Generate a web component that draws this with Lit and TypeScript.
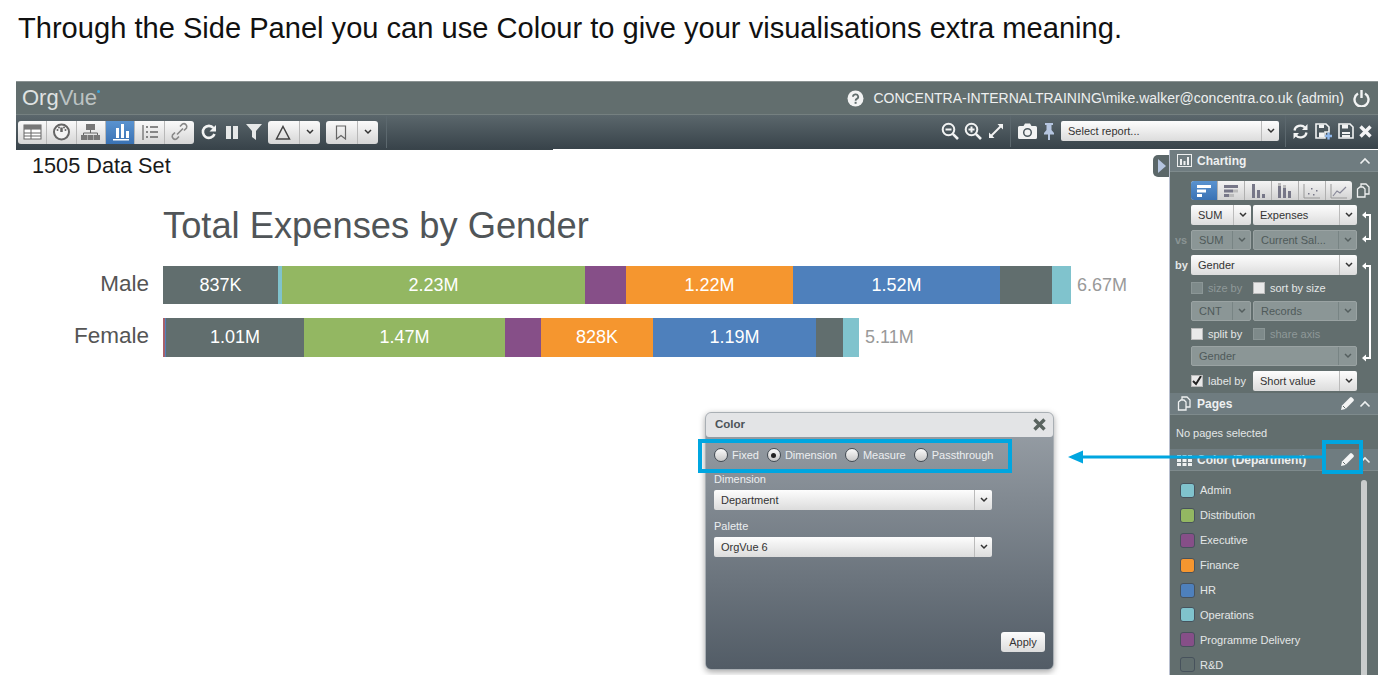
import { LitElement, html, css, svg } from 'lit';
import { customElement } from 'lit/decorators.js';

const TEAL = '#80c3cd';
const GREEN = '#93b762';
const PURPLE = '#864f88';
const ORANGE = '#f5962f';
const BLUE = '#4e80bc';
const SLATE = '#616e6e';

const MALE = [
  { w: 115, c: SLATE, t: '837K' },
  { w: 4, c: TEAL },
  { w: 303, c: GREEN, t: '2.23M' },
  { w: 41, c: PURPLE },
  { w: 167, c: ORANGE, t: '1.22M' },
  { w: 207, c: BLUE, t: '1.52M' },
  { w: 52, c: SLATE },
  { w: 19, c: TEAL },
];

const FEMALE = [
  { w: 2, c: '#a8606a' },
  { w: 1, c: BLUE },
  { w: 138, c: SLATE, t: '1.01M' },
  { w: 201, c: GREEN, t: '1.47M' },
  { w: 36, c: PURPLE },
  { w: 112, c: ORANGE, t: '828K' },
  { w: 163, c: BLUE, t: '1.19M' },
  { w: 27, c: SLATE },
  { w: 16, c: TEAL },
];

const DEPARTMENTS = [
  ['Admin', TEAL],
  ['Distribution', GREEN],
  ['Executive', PURPLE],
  ['Finance', ORANGE],
  ['HR', BLUE],
  ['Operations', TEAL],
  ['Programme Delivery', PURPLE],
  ['R&D', SLATE],
];

const icon = (w: number, h: number, body: unknown) => html`
  <svg width=${w} height=${h} viewBox="0 0 ${w} ${h}">${body}</svg>
`;

const chevron = html`
  <svg width="8" height="6" viewBox="0 0 8 6"><path d="M1 1l3 3 3-3" fill="none" stroke="currentColor" stroke-width="1.5"/></svg>
`;

const chevronUp = icon(12, 8, svg`<path d="M1.500 6.500L6 2l4.500 4.500" fill="none" stroke="#eef0f0" stroke-width="1.600"/>`);

const pencil = icon(15, 15, svg`<path d="M1 14l1-4.500L10 1.500a1.500 1.500 0 0 1 2 0l1.500 1.500a1.500 1.500 0 0 1 0 2L5.500 13z" fill="#f4f5f5"/><path d="M3 10l2.500 2.500" stroke="#626e6e" stroke-width="1"/>`);

const pagesIcon = icon(15, 15, svg`<path d="M5 4V1h5l3 3v7H9" fill="none" stroke="#eef0f0" stroke-width="1.300"/><path d="M1.500 6L4 4h3l2 2v8H1.500z" fill="none" stroke="#eef0f0" stroke-width="1.300"/>`);

const TOOL_ICONS = [
  svg`<rect x="2" y="3" width="17" height="14" fill="#fff" stroke="#666"/><path d="M2 7h17M2 11h17M2 14h17M9 7v10" stroke="#666"/><rect x="2" y="3" width="17" height="4" fill="#777"/>`,
  svg`<circle cx="10.500" cy="10" r="7.500" fill="#f4f4f4" stroke="#666" stroke-width="2"/><path d="M10.500 10V5.500" stroke="#666" stroke-width="2.500"/><circle cx="6.500" cy="8" r="1" fill="#666"/><circle cx="14.500" cy="8" r="1" fill="#666"/><circle cx="8" cy="5.500" r="1" fill="#666"/><circle cx="13" cy="5.500" r="1" fill="#666"/>`,
  svg`<rect x="6" y="2" width="9" height="6" fill="#777"/><path d="M10.500 8v3M3.500 14v-3h14v3" fill="none" stroke="#666"/><rect x="1" y="13" width="6" height="5" fill="#777"/><rect x="7.500" y="13" width="6" height="5" fill="#777"/><rect x="14" y="13" width="6" height="5" fill="#777"/>`,
  svg`<path d="M6 6h3v10H6zM11 2h3v14h-3zM16 9h3v7h-3z" fill="#fff"/><rect x="3" y="17" width="16" height="1.500" fill="#fff"/>`,
  svg`<path d="M4 3v15" stroke="#666" stroke-width="1.200"/><path d="M7 5h2M7 10h2M7 15h2M11 5h8M11 10h8M11 15h8" stroke="#666" stroke-width="1.500"/>`,
  svg`<path d="M8 13l6-6M6 11l-2.500 2.500a3 3 0 0 0 4 4L10 15M11 5l2.500-2.500a3 3 0 0 1 4 4L15 9" fill="none" stroke="#888" stroke-width="1.600" transform="translate(0 -0.500)"/>`,
];

const CHART_ICONS = [
  svg`<path d="M3 3h14v3H3zM3 7.500h9v3H3zM3 12h5v3H3z" fill="#fff"/>`,
  svg`<path d="M3 3h14v3H3z" fill="#778"/><path d="M3 7.500h9v3H3zM3 12h5v3H3z" fill="#778"/><path d="M12 7.500h5v3h-5zM8 12h5v3H8z" fill="#bbb"/>`,
  svg`<path d="M4 2h3v14H4zM9 8h3v8H9zM14 12h3v4h-3z" fill="#778"/>`,
  svg`<path d="M3 2h3v14H3zM8 6h3v10H8zM13 9h3v7h-3z" fill="#778"/><path d="M3 1h3v3H3zM8 3h3v3H8z" fill="#bbb"/>`,
  svg`<path d="M2 2v14h16" fill="none" stroke="#999"/><path d="M6 11h1.500v1.500H6zM9 6h1.500v1.500H9zM11 12h1.500v1.500H11zM14 8h1.500v1.500H14z" fill="#778"/>`,
  svg`<path d="M2 2v14h16" fill="none" stroke="#999"/><path d="M4 14l4-5 3 2 6-6" fill="none" stroke="#889" stroke-width="1.200"/>`,
];

@customElement('app-root')
export class AppRoot extends LitElement {
  static styles = css`
    :host {
      display: block;
      position: relative;
      width: 1378px;
      height: 675px;
      overflow: hidden;
      background: #fff;
      font-family: 'Liberation Sans', Arial, sans-serif;
    }

    .caption {
      height: 81px;
      box-sizing: border-box;
      margin: 0;
      padding: 12px 0 0 18px;
      font-size: 29.080px;
      line-height: 32px;
      font-weight: 400;
      color: #111;
    }

    .app {
      height: 594px;
      margin-left: 16px;
      display: flex;
      flex-direction: column;
    }

    .topbar {
      height: 34px;
      box-sizing: border-box;
      flex: none;
      display: flex;
      align-items: center;
      padding: 0 8px 0 6px;
      background: #626e6e;
      border-top: 1px solid #8b9393;
      border-bottom: 1px solid #758080;
      color: #eef0f0;
    }

    .logo {
      font-size: 22px;
      color: #dfe2e2;
      position: relative;
    }

    .logo span {
      color: #bcc3c3;
    }

    .logo i {
      position: absolute;
      top: 5px;
      right: -3px;
      width: 3px;
      height: 3px;
      border-radius: 50%;
      background: #38a3d8;
    }

    .user {
      margin-left: auto;
      display: flex;
      align-items: center;
      font-size: 14px;
      gap: 9px;
    }

    .toolbar {
      height: 34px;
      flex: none;
      display: flex;
      align-items: center;
      padding: 0 6px 0 2px;
      background: linear-gradient(#5b676c, #38434a);
    }

    .tools {
      display: flex;
      height: 23px;
      border-radius: 3px;
      overflow: hidden;
      background: linear-gradient(#fafafa, #d6d6d6);
      margin-right: 7px;
    }

    .tool {
      width: 29.330px;
      display: flex;
      align-items: center;
      justify-content: center;
      border-right: 1px solid #b8b8b8;
      box-sizing: border-box;
    }

    .tool:last-child {
      border-right: none;
    }

    .tool.active {
      background: linear-gradient(#5a93d0, #3a72b4);
    }

    .glyph {
      display: flex;
      align-items: center;
      justify-content: center;
    }

    .mini {
      width: 52px;
      height: 23px;
      margin-left: 6px;
      display: flex;
      border-radius: 3px;
      overflow: hidden;
      background: linear-gradient(#fafafa, #d6d6d6);
      color: #333;
    }

    .mini .face {
      flex: 1;
      display: flex;
      align-items: center;
      justify-content: center;
      border-right: 1px solid #b8b8b8;
    }

    .mini .drop {
      width: 20px;
      display: flex;
      align-items: center;
      justify-content: center;
    }

    .divider {
      width: 1px;
      height: 32px;
      background: #5c686e;
    }

    .toolbar-right {
      margin-left: auto;
      display: flex;
      align-items: center;
      padding-bottom: 2px;
    }

    .report {
      width: 218px;
      height: 21px;
      margin: 0 6px 0 6px;
      font-size: 11px;
    }

    .workspace {
      flex: 1;
      display: flex;
      position: relative;
      min-height: 0;
    }

    .main {
      flex: 1;
      min-width: 0;
      position: relative;
    }

    .notch {
      width: 537px;
      height: 1px;
      background: #39444a;
    }

    .dataset {
      padding: 3px 0 0 16px;
      font-size: 21.700px;
      line-height: 26px;
      color: #1a1a1a;
    }

    .chart-title {
      margin: 25px 0 0 147px;
      font-size: 36.300px;
      line-height: 43px;
      font-weight: 400;
      color: #505558;
    }

    .bars {
      margin-top: 19px;
      display: flex;
      flex-direction: column;
      gap: 14px;
    }

    .bar-row {
      display: flex;
      align-items: center;
      height: 38px;
    }

    .bar-row + .bar-row {
      height: 39px;
    }

    .bar-label {
      width: 133px;
      flex: none;
      text-align: right;
      font-size: 22.500px;
      color: #555;
      position: relative;
      top: -1.500px;
    }

    .bar {
      margin-left: 14px;
      display: flex;
      height: 100%;
    }

    .seg {
      display: flex;
      align-items: center;
      justify-content: center;
      color: #fff;
      font-size: 18px;
    }

    .total {
      margin-left: 6px;
      font-size: 18px;
      color: #999;
    }

    .handle {
      position: absolute;
      top: 6px;
      right: 0;
      width: 16px;
      height: 22px;
      box-sizing: border-box;
      padding-left: 5px;
      display: flex;
      align-items: center;
      background: #5b6769;
      border-radius: 5px 0 0 5px;
    }

    .handle svg {
      display: block;
    }

    .side {
      width: 209px;
      flex: none;
      background: #626e6e;
      border-left: 1px solid #b9c0d0;
      box-sizing: border-box;
      color: #e4e7e7;
      font-size: 11px;
      display: flex;
      flex-direction: column;
      min-height: 0;
      overflow: hidden;
      margin-top: 1px;
    }

    .head {
      height: 21px;
      flex: none;
      display: flex;
      align-items: center;
      gap: 5px;
      padding: 0 7px;
      background: #6f7c80;
      border-bottom: 1px solid #7e8a8c;
      font-size: 12px;
      font-weight: 700;
      color: #eef0f0;
    }

    .head .right {
      margin-left: auto;
      display: flex;
      align-items: center;
      gap: 4px;
    }

    .charting {
      position: relative;
      padding: 9px 0 2px 21px;
      flex: none;
      box-sizing: border-box;
      height: 221px;
    }

    .types {
      display: flex;
      width: 161px;
      height: 19px;
      border-radius: 3px;
      overflow: hidden;
      background: linear-gradient(#f4f4f4, #d2d2d2);
    }

    .type {
      flex: 1;
      display: flex;
      align-items: center;
      justify-content: center;
      border-right: 1px solid #b0b0b0;
    }

    .type:last-child {
      border-right: none;
    }

    .type.active {
      background: linear-gradient(#5a93d0, #3a72b4);
    }

    .copy {
      position: absolute;
      top: 11px;
      left: 186px;
    }

    .row {
      display: flex;
      gap: 2px;
      margin-top: 5px;
      position: relative;
    }

    .row.tight {
      margin-top: 3px;
    }

    .row.tighter {
      margin-top: 2px;
    }

    .row-label {
      position: absolute;
      left: -16px;
      top: 4px;
      font-size: 11px;
      font-weight: 700;
    }

    .row-label.off {
      color: #8a9494;
    }

    .sel {
      height: 20px;
      box-sizing: border-box;
      display: flex;
      align-items: center;
      border-radius: 2px;
      background: linear-gradient(#fdfdfd, #dcdcdc);
      color: #333;
      overflow: hidden;
      font-size: 11px;
    }

    .sel .val {
      flex: 1;
      min-width: 0;
      padding-left: 7px;
      white-space: nowrap;
    }

    .sel .arrow {
      width: 17px;
      align-self: stretch;
      display: flex;
      align-items: center;
      justify-content: center;
      border-left: 1px solid #bbb;
      color: #333;
    }

    .sel.off {
      background: #8b9696;
      color: #4f5a5a;
      border: 1px solid #9aa3a3;
    }

    .sel.off .arrow {
      border-left-color: #788484;
      color: #555f5f;
    }

    .w60 { width: 60px; }
    .w104 { width: 104px; }
    .w166 { width: 166px; }

    .checks {
      display: flex;
      align-items: center;
      height: 20px;
      margin-top: 3px;
      font-size: 11px;
    }

    .check {
      display: flex;
      align-items: center;
      gap: 5px;
      width: 62px;
      flex: none;
      white-space: nowrap;
    }

    .check.off {
      color: #8f9999;
    }

    .box {
      width: 12px;
      height: 12px;
      flex: none;
      box-sizing: border-box;
      background: #e9e9e9;
      border: 1px solid #bbb;
      display: flex;
      align-items: center;
      justify-content: center;
    }

    .off .box {
      background: #7e8a8a;
      border-color: #8b9696;
    }

    .links {
      position: absolute;
      left: 192px;
      top: 0;
    }

    .pages-body {
      height: 34px;
      flex: none;
      display: flex;
      align-items: center;
      padding: 1px 0 0 6px;
      box-sizing: border-box;
      font-size: 11px;
    }

    .legend {
      flex: 1;
      min-height: 0;
      position: relative;
      padding: 7px 0 0 10px;
    }

    .legend-item {
      display: flex;
      align-items: center;
      gap: 5px;
      height: 24.900px;
      font-size: 11px;
    }

    .swatch {
      width: 15px;
      height: 15px;
      box-sizing: border-box;
      border: 1px solid #47525c;
      border-radius: 3px;
    }

    .scroll {
      position: absolute;
      top: 9px;
      bottom: -4px;
      left: 191px;
      width: 6px;
      border-radius: 3px;
      background: #c9cccc;
    }

    .dialog {
      position: absolute;
      left: 689px;
      top: 263px;
      width: 349px;
      height: 258px;
      box-sizing: border-box;
      border: 1px solid #a9afb4;
      border-radius: 6px;
      background: linear-gradient(#9aa1a8, #525c66);
      box-shadow: 0 2px 6px rgba(0, 0, 0, 0.35);
      display: flex;
      flex-direction: column;
      color: #eceef0;
      font-size: 11px;
    }

    .dialog-title {
      height: 24px;
      flex: none;
      box-sizing: border-box;
      display: flex;
      align-items: center;
      justify-content: space-between;
      padding: 0 7px 2px 9px;
      background: #e3e4e6;
      border-radius: 5px 5px 3px 3px;
      color: #4b5358;
      font-weight: 700;
      font-size: 11.500px;
    }

    .radios {
      display: flex;
      align-items: center;
      margin: 11px 0 0 8px;
      height: 14px;
    }

    .radio {
      display: flex;
      align-items: center;
      gap: 4px;
      margin-right: 8px;
    }

    .dot {
      width: 14px;
      height: 14px;
      box-sizing: border-box;
      border-radius: 50%;
      border: 1px solid #444c54;
      background: linear-gradient(#fafafa, #c8c8c8);
      display: flex;
      align-items: center;
      justify-content: center;
    }

    .dot i {
      width: 5px;
      height: 5px;
      border-radius: 50%;
      background: #222;
    }

    .field {
      margin: 11px 0 0 8px;
    }

    .field + .field {
      margin-top: 10px;
    }

    .field label {
      display: block;
      height: 17px;
      line-height: 13px;
    }

    .field .sel {
      width: 278px;
    }

    .apply {
      margin: auto 8px 17px 0;
      align-self: flex-end;
      width: 44px;
      height: 20px;
      display: flex;
      align-items: center;
      justify-content: center;
      border-radius: 3px;
      background: linear-gradient(#fdfdfd, #dcdcdc);
      color: #333;
    }

    .callout {
      position: absolute;
      box-sizing: border-box;
      border: 4px solid #00a6e0;
    }

    .callout.radios-box {
      left: 698px;
      top: 439px;
      width: 314px;
      height: 34px;
    }

    .callout.edit-box {
      left: 1322px;
      top: 440px;
      width: 41px;
      height: 34px;
    }

    .arrow-line {
      position: absolute;
      left: 1068px;
      top: 450px;
    }
  `;

  private sel(text: string, cls: string, off = false) {
    return html`
      <div class="sel ${cls} ${off ? 'off' : ''}">
        <span class="val">${text}</span>
        <span class="arrow">${chevron}</span>
      </div>
    `;
  }

  private bar(label: string, segs: { w: number; c: string; t?: string }[], total: string) {
    return html`
      <div class="bar-row">
        <div class="bar-label">${label}</div>
        <div class="bar">
          ${segs.map(s => html`<div class="seg" style="width:${s.w}px;background:${s.c}">${s.t ?? ''}</div>`)}
        </div>
        <div class="total">${total}</div>
      </div>
    `;
  }

  private renderTopbar() {
    return html`
      <div class="topbar">
        <div class="logo">Org<span>Vue</span><i></i></div>
        <div class="user">
          ${icon(17, 17, svg`<circle cx="8.500" cy="8.500" r="8" fill="#f2f3f3"/><path d="M6 6.800a2.600 2.400 0 1 1 3.800 2.100c-.9.500-1.200 1-1.200 1.800" fill="none" stroke="#626e6e" stroke-width="1.800"/><rect x="7.600" y="11.800" width="2" height="2" fill="#626e6e"/>`)}
          <span>CONCENTRA-INTERNALTRAINING\\mike.walker@concentra.co.uk (admin)</span>
          ${icon(17, 18, svg`<path d="M5 4.500a7 7 0 1 0 7 0" fill="none" stroke="#f2f3f3" stroke-width="2.400"/><path d="M8.500 1v8" stroke="#f2f3f3" stroke-width="2.400"/>`)}
        </div>
      </div>
    `;
  }

  private renderToolbar() {
    return html`
      <div class="toolbar">
        <div class="tools">
          ${TOOL_ICONS.map((t, i) => html`
            <div class="tool ${i === 3 ? 'active' : ''}">${icon(21, 20, t)}</div>
          `)}
        </div>
        <div class="glyph">${icon(16, 16, svg`<path d="M13.500 10a6 6 0 1 1-1-6" fill="none" stroke="#f2f3f3" stroke-width="2.600"/><path d="M15 1v6.500H8.500z" fill="#f2f3f3"/>`)}</div>
        <div class="glyph" style="margin-left:9px">${icon(12, 13, svg`<path d="M0 0h5v13H0zM7 0h5v13H7z" fill="#e6e8e8"/>`)}</div>
        <div class="glyph" style="margin-left:8px">${icon(16, 16, svg`<path d="M0 0h16L10 7v9L6 13V7z" fill="#e6e8e8"/>`)}</div>
        <div class="mini">
          <div class="face">${icon(16, 15, svg`<path d="M8 1.500L14.500 14h-13z" fill="none" stroke="#444" stroke-width="1.500"/>`)}</div>
          <div class="drop">${chevron}</div>
        </div>
        <div class="mini">
          <div class="face">${icon(12, 15, svg`<path d="M1.500 1h9v13L6 10.500 1.500 14z" fill="none" stroke="#666" stroke-width="1.200"/>`)}</div>
          <div class="drop">${chevron}</div>
        </div>
        <div class="divider" style="margin-left:8px"></div>
        <div class="toolbar-right">
          <div class="glyph">${icon(18, 18, svg`<circle cx="7.500" cy="7.500" r="5.800" fill="none" stroke="#f2f3f3" stroke-width="2"/><path d="M11.800 11.800L17 17" stroke="#f2f3f3" stroke-width="2.600"/><path d="M4.500 7.500h6" stroke="#f2f3f3" stroke-width="2"/>`)}</div>
          <div class="glyph" style="margin-left:5px">${icon(18, 18, svg`<circle cx="7.500" cy="7.500" r="5.800" fill="none" stroke="#f2f3f3" stroke-width="2"/><path d="M11.800 11.800L17 17" stroke="#f2f3f3" stroke-width="2.600"/><path d="M4.500 7.500h6M7.500 4.500v6" stroke="#f2f3f3" stroke-width="2"/>`)}</div>
          <div class="glyph" style="margin-left:6px">${icon(16, 16, svg`<path d="M3 13l10-10" stroke="#f2f3f3" stroke-width="2"/><path d="M9.500 1H15v5.500zM1 9.500V15h5.500z" fill="#f2f3f3"/>`)}</div>
          <div class="divider" style="margin:0 7px 0 6px"></div>
          <div class="glyph">${icon(19, 16, svg`<path d="M1.500 3h4l1.500-2.500h5L13.500 3h4a1.500 1.500 0 0 1 1.500 1.500v10a1.500 1.500 0 0 1-1.500 1.500h-16A1.500 1.500 0 0 1 0 14.500v-10A1.500 1.500 0 0 1 1.500 3z" fill="#f2f3f3"/><circle cx="9.500" cy="9.500" r="3.800" fill="none" stroke="#4c585e" stroke-width="1.500"/>`)}</div>
          <div class="glyph" style="margin-left:6px">${icon(12, 17, svg`<path d="M2 0h8v2H8.500v5L11 10v1.500H7V17H5v-5.500H1V10l2.500-3V2H2z" fill="#b5c5e0"/>`)}</div>
          <div class="sel report">
            <span class="val">Select report...</span>
            <span class="arrow">${chevron}</span>
          </div>
          <div class="divider"></div>
          <div class="glyph" style="margin-left:7px">${icon(15, 15, svg`<path d="M1.500 6.500a6 5.500 0 0 1 10.500-3M13.500 8.500a6 5.500 0 0 1-10.500 3" fill="none" stroke="#f2f3f3" stroke-width="2.200"/><path d="M14.500 0v6H9zM.5 15V9H6z" fill="#f2f3f3"/>`)}</div>
          <div class="glyph" style="margin-left:7px">${icon(17, 17, svg`<path d="M1 1h10l3 3v5h-4v6H1z" fill="none" stroke="#f2f3f3" stroke-width="1.600"/><path d="M4 1.500h5v3.500H4zM4 9.500h5v5H4z" fill="#f2f3f3"/><path d="M10 13h7M13.500 9.500v7" stroke="#8fb7ea" stroke-width="2.400"/>`)}</div>
          <div class="glyph" style="margin-left:6px">${icon(16, 16, svg`<path d="M1 1h11l3 3v11H1z" fill="none" stroke="#f2f3f3" stroke-width="1.600"/><path d="M4 1.500h6v4H4zM4 9h8v5.500H4z" fill="#f2f3f3"/><path d="M4 11.500h8" stroke="#4c585e"/>`)}</div>
          <div class="glyph" style="margin-left:5px">${icon(13, 13, svg`<path d="M1.500 1.500l10 10M11.500 1.500l-10 10" stroke="#f4f4f6" stroke-width="3.400"/>`)}</div>
        </div>
      </div>
    `;
  }

  private renderMain() {
    return html`
      <div class="main">
        <div class="notch"></div>
        <div class="dataset">1505 Data Set</div>
        <h2 class="chart-title">Total Expenses by Gender</h2>
        <div class="bars">
          ${this.bar('Male', MALE, '6.67M')}
          ${this.bar('Female', FEMALE, '5.11M')}
        </div>
        <div class="handle">
          ${icon(8, 14, svg`<path d="M0 0l8 7-8 7z" fill="#b5c5e0"/>`)}
        </div>
      </div>
    `;
  }

  private renderCharting() {
    return html`
      <div class="head">
        ${icon(15, 13, svg`<rect x=".5" y=".5" width="14" height="12" fill="none" stroke="#eef0f0"/><path d="M3 5h2v6H3zM6.500 7h2v4h-2zM10 3h2v8h-2z" fill="#eef0f0"/>`)}
        Charting
        <span class="right">${chevronUp}</span>
      </div>
      <div class="charting">
        <div class="types">
          ${CHART_ICONS.map((t, i) => html`
            <div class="type ${i === 0 ? 'active' : ''}">${icon(20, 18, t)}</div>
          `)}
        </div>
        <div class="copy">${pagesIcon}</div>
        <div class="row">${this.sel('SUM', 'w60')}${this.sel('Expenses', 'w104')}</div>
        <div class="row">
          <span class="row-label off">vs</span>
          ${this.sel('SUM', 'w60', true)}${this.sel('Current Sal...', 'w104', true)}
        </div>
        <div class="row">
          <span class="row-label">by</span>
          ${this.sel('Gender', 'w166')}
        </div>
        <div class="checks">
          <div class="check off"><span class="box"></span>size by</div>
          <div class="check"><span class="box"></span>sort by size</div>
        </div>
        <div class="row tight">${this.sel('CNT', 'w60', true)}${this.sel('Records', 'w104', true)}</div>
        <div class="checks">
          <div class="check"><span class="box"></span>split by</div>
          <div class="check off"><span class="box"></span>share axis</div>
        </div>
        <div class="row tighter">${this.sel('Gender', 'w166', true)}</div>
        <div class="row">
          <div class="check" style="width:60px">
            <span class="box">${icon(10, 10, svg`<path d="M1 5l3 3 5-8" fill="none" stroke="#222" stroke-width="2"/>`)}</span>
            label by
          </div>
          ${this.sel('Short value', 'w104')}
        </div>
        <svg class="links" width="12" height="221" viewBox="0 0 12 221">
          <path d="M2 43h6v24H2M2 94h6v92H2" fill="none" stroke="#fff" stroke-width="2"/>
          <path d="M0 43l4-3.500v7zM0 67l4-3.500v7zM0 94l4-3.500v7zM0 186l4-3.500v7z" fill="#fff"/>
        </svg>
      </div>
    `;
  }

  private renderSide() {
    return html`
      <div class="side">
        ${this.renderCharting()}
        <div class="head">
          ${pagesIcon}
          Pages
          <span class="right">${pencil}${chevronUp}</span>
        </div>
        <div class="pages-body">No pages selected</div>
        <div class="head">
          ${icon(15, 12, svg`<path d="M0 1h4v3H0zM5.500 1h4v3h-4zM11 1h4v3h-4zM0 5h4v3H0zM5.500 5h4v3h-4zM11 5h4v3h-4zM0 9h4v3H0zM5.500 9h4v3h-4zM11 9h4v3h-4z" fill="#eef0f0"/>`)}
          Color (Department)
          <span class="right">${pencil}${chevronUp}</span>
        </div>
        <div class="legend">
          ${DEPARTMENTS.map(([name, c]) => html`
            <div class="legend-item">
              <span class="swatch" style="background:${c}"></span>
              ${name}
            </div>
          `)}
          <div class="scroll"></div>
        </div>
      </div>
    `;
  }

  private renderDialog() {
    const radios = ['Fixed', 'Dimension', 'Measure', 'Passthrough'];
    return html`
      <div class="dialog">
        <div class="dialog-title">
          Color
          ${icon(13, 13, svg`<path d="M1.500 1.500l10 10M11.500 1.500l-10 10" stroke="#59635f" stroke-width="3.400"/>`)}
        </div>
        <div class="radios">
          ${radios.map(r => html`
            <div class="radio">
              <span class="dot">${r === 'Dimension' ? html`<i></i>` : ''}</span>
              ${r}
            </div>
          `)}
        </div>
        <div class="field">
          <label>Dimension</label>
          ${this.sel('Department', '')}
        </div>
        <div class="field">
          <label>Palette</label>
          ${this.sel('OrgVue 6', '')}
        </div>
        <div class="apply">Apply</div>
      </div>
    `;
  }

  render() {
    return html`
      <h1 class="caption">Through the Side Panel you can use Colour to give your visualisations extra meaning.</h1>
      <div class="app">
        ${this.renderTopbar()}
        ${this.renderToolbar()}
        <div class="workspace">
          ${this.renderMain()}
          ${this.renderSide()}
          ${this.renderDialog()}
        </div>
      </div>
      <div class="callout radios-box"></div>
      <div class="callout edit-box"></div>
      <svg class="arrow-line" width="256" height="14" viewBox="0 0 256 14">
        <path d="M0 7l15-6.500v13z" fill="#00a6e0"/>
        <rect x="10" y="5.500" width="246" height="3" fill="#00a6e0"/>
      </svg>
    `;
  }
}
